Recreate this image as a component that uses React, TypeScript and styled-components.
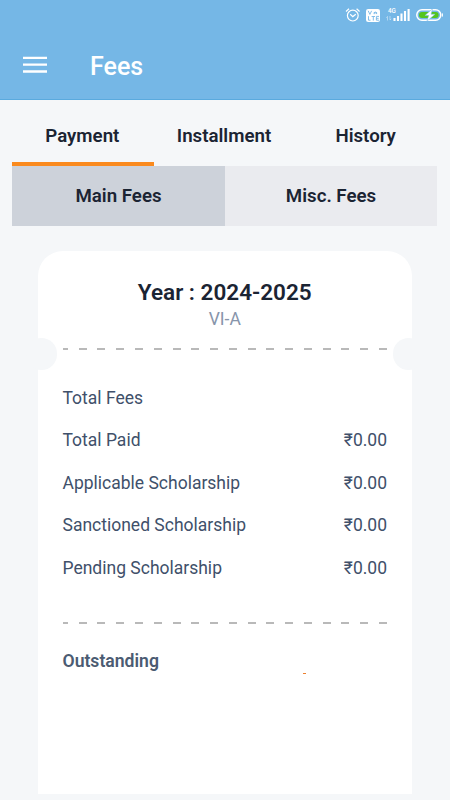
import React from "react";
import styled, { createGlobalStyle } from "styled-components";

const GlobalStyle = createGlobalStyle`
  * { box-sizing: border-box; }
  body { margin: 0; background: #f5f7f9; font-family: Roboto, "Noto Sans", sans-serif; }
`;

const Screen = styled.main`
  width: 450px;
  height: 800px;
  overflow: hidden;
  display: flex;
  flex-direction: column;
  background: #f5f7f9;
`;

const Header = styled.header`
  height: 100px;
  flex: none;
  background: #75b7e6;
  border-bottom: 1px solid #5aaade;
`;

const StatusBar = styled.div`
  height: 31px;
  padding: 6px 7px 0 0;
  display: flex;
  justify-content: flex-end;
`;

const AppBar = styled.div`
  height: 69px;
  padding-left: 23px;
  display: flex;
  align-items: center;
`;

const MenuIcon = styled.svg`
  display: block;
  margin-top: -2px;
`;

const MenuButton = styled.button`
  padding: 0;
  border: 0;
  background: none;
`;

const Title = styled.h1`
  margin: 2px 0 0 43px;
  color: #fff;
  font-size: 25px;
  line-height: 30px;
  font-weight: 500;
`;

const Tabs = styled.nav`
  margin: 0 13px 0 12px;
  height: 66px;
  flex: none;
  display: grid;
  grid-template-columns: repeat(3, 1fr);
`;

const Tab = styled.button<{ $active?: boolean }>`
  padding: 10px 1px 0 0;
  border: 0;
  border-bottom: 4px solid ${(p) => (p.$active ? "#fa8a1e" : "transparent")};
  background: none;
  color: #1b2433;
  font: 600 18.7px/22px Roboto, sans-serif;
`;

const SubTabs = styled.div`
  margin: 0 13px 0 12px;
  height: 60px;
  flex: none;
  display: grid;
  grid-template-columns: 213px 212px;
`;

const SubTab = styled.button<{ $active?: boolean }>`
  padding: 0;
  border: 0;
  background: ${(p) => (p.$active ? "#cdd2da" : "#eaebef")};
  color: #1b2433;
  font: 600 18.7px/22px Roboto, sans-serif;
`;

const Card = styled.section`
  width: 374px;
  height: 543px;
  margin: 25px 0 0 38px;
  padding: 28px 25px 0 24.5px;
  flex: none;
  position: relative;
  background: #fff;
  border-radius: 25px 25px 0 0;
`;

const Notch = styled.span<{ $side: "left" | "right" }>`
  position: absolute;
  top: 86.5px;
  ${(p) => p.$side}: -12.2px;
  width: 31.5px;
  height: 32.5px;
  border-radius: 16px;
  background: #f5f7f9;
`;

const YearTitle = styled.h2`
  margin: 0;
  color: #1b2433;
  font-size: 22.5px;
  line-height: 26px;
  font-weight: 600;
  text-align: center;
`;

const ClassName = styled.p`
  margin: 3px 0 18px;
  color: #8795ab;
  font-size: 17.5px;
  line-height: 22px;
  text-align: center;
`;

const Dashes = styled.div`
  height: 2px;
  background: repeating-linear-gradient(to left, #b9b9b9 0 8px, transparent 8px 18.77px);
`;

const FeeList = styled.dl`
  margin: 26.7px 0 33.3px;
  display: flex;
  flex-direction: column;
`;

const FeeRow = styled.div`
  height: 42.5px;
  display: flex;
  justify-content: space-between;
  align-items: center;
  color: #40506a;
  font-size: 17.5px;
  line-height: 22px;
`;

const FeeLabel = styled.dt``;

const FeeValue = styled.dd`
  margin: 0;
`;

const Outstanding = styled.div`
  margin-top: 26px;
  display: flex;
  justify-content: space-between;
  color: #4b5b72;
  font-size: 17.6px;
  line-height: 22px;
  font-weight: 600;
`;

const AmountTick = styled.span`
  width: 3px;
  height: 1px;
  margin: 23px 81px 0 0;
  background: #ed802f;
`;

const fees = [
  { label: "Total Fees", value: "" },
  { label: "Total Paid", value: "₹0.00" },
  { label: "Applicable Scholarship", value: "₹0.00" },
  { label: "Sanctioned Scholarship", value: "₹0.00" },
  { label: "Pending Scholarship", value: "₹0.00" },
];

const StatusIcons = () => (
  <svg width="99" height="18" viewBox="344 6 99 18" fill="none" stroke="#fff">
    <circle cx="352.8" cy="15.6" r="5.4" strokeWidth="1.2" />
    <path d="M346 11.5l3-2.7M359.6 11.5l-3-2.7M350.2 14.3l2.6 2.3 3-2.3" strokeWidth="1.2" />
    <rect x="366" y="9" width="14" height="13" rx="2.2" fill="#fff" stroke="none" />
    <path
      d="M368.2 10.8l1.7 3.6 1.7-3.6M374.2 14.2a1.3 1.5 0 1 1 2.4-.1M373.9 12.9h3M368.5 16.2v4h2M371.6 16.5h3.4M373.3 16.5V20.6M379 16.4h-2.6v3.8h2.6M376.4 18.3h2.2"
      stroke="#75b7e6"
      strokeWidth=".9"
    />
    <text x="388" y="13" fill="#fff" stroke="none" fontFamily="Roboto, sans-serif" fontSize="6.3" fontWeight="500">
      4G
    </text>
    <path d="M387.5 20.5v-4l-1.2 1.2M390 16v4l1.2-1.2" strokeWidth=".8" opacity=".55" />
    <path d="M394.5 21v-3M398 21v-5M401.5 21v-7.5M405 21V11M408.6 21V9" strokeWidth="2.1" />
    <rect x="416.8" y="9.8" width="24" height="10.4" rx="5.2" strokeWidth="1.5" />
    <rect x="419" y="12" width="19.6" height="6" rx="3" fill="#55c51d" stroke="none" />
    <path d="M432.5 8.8l-7.6 6.7h3.8l-1.8 5.7 8.2-7h-4z" fill="#fff" stroke="#75b7e6" strokeWidth=".5" />
    <path d="M442.4 13.4v3.2" strokeWidth="1" />
  </svg>
);

export default function App() {
  return (
    <>
      <GlobalStyle />
      <Screen>
        <Header>
          <StatusBar>
            <StatusIcons />
          </StatusBar>
          <AppBar>
            <MenuButton aria-label="Menu">
              <MenuIcon width="24" height="18" viewBox="0 0 24 18" stroke="#fff" strokeWidth="2.3">
                <path d="M0 1.9h24M0 8.7h24M0 15.5h24" />
              </MenuIcon>
            </MenuButton>
            <Title>Fees</Title>
          </AppBar>
        </Header>
        <Tabs>
          <Tab $active>Payment</Tab>
          <Tab>Installment</Tab>
          <Tab>History</Tab>
        </Tabs>
        <SubTabs>
          <SubTab $active>Main Fees</SubTab>
          <SubTab>Misc. Fees</SubTab>
        </SubTabs>
        <Card>
          <Notch $side="left" />
          <Notch $side="right" />
          <YearTitle>Year : 2024-2025</YearTitle>
          <ClassName>VI-A</ClassName>
          <Dashes />
          <FeeList>
            {fees.map((fee) => (
              <FeeRow key={fee.label}>
                <FeeLabel>{fee.label}</FeeLabel>
                <FeeValue>{fee.value}</FeeValue>
              </FeeRow>
            ))}
          </FeeList>
          <Dashes />
          <Outstanding>
            <span>Outstanding</span>
            <AmountTick />
          </Outstanding>
        </Card>
      </Screen>
    </>
  );
}
